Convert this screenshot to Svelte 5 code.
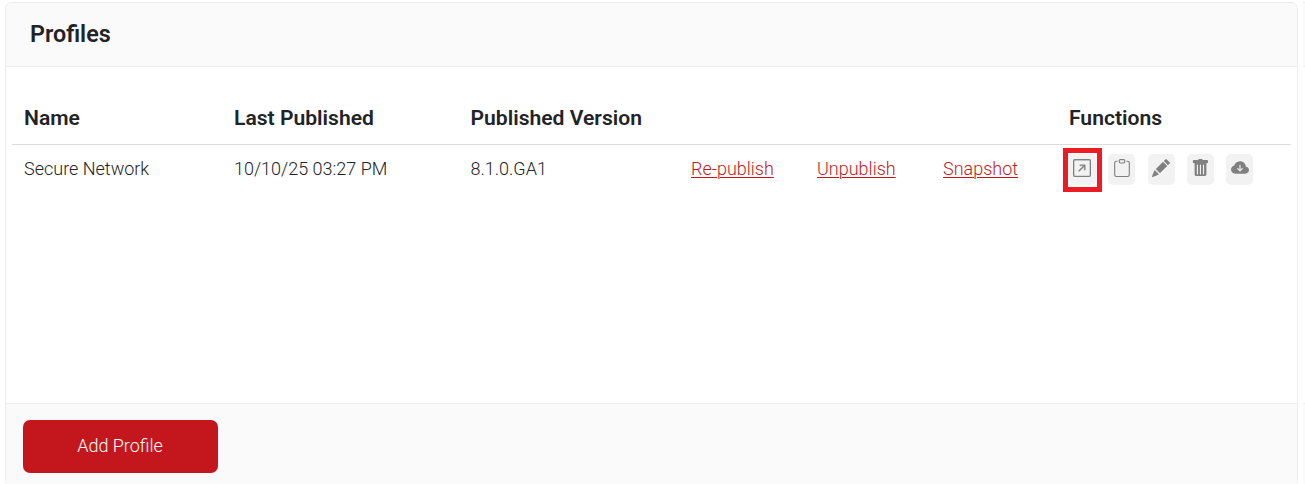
<script lang="ts">
    const profiles = [
        {
            name: "Secure Network",
            published: "10/10/25 03:27 PM",
            version: "8.1.0.GA1",
        },
    ];

    const actions = ["Re-publish", "Unpublish", "Snapshot"];

    const functions = [
        {
            name: "open",
            selected: true,
            path: "M15 2a1 1 0 0 0-1-1H2a1 1 0 0 0-1 1v12a1 1 0 0 0 1 1h12a1 1 0 0 0 1-1zM0 2a2 2 0 0 1 2-2h12a2 2 0 0 1 2 2v12a2 2 0 0 1-2 2H2a2 2 0 0 1-2-2zm5.854 8.803a.5.5 0 1 1-.708-.707L9.243 6H6.475a.5.5 0 1 1 0-1h3.975a.5.5 0 0 1 .5.5v3.975a.5.5 0 1 1-1 0V6.707z",
        },
        {
            name: "copy",
            path: "M4 1.5H3a2 2 0 0 0-2 2V14a2 2 0 0 0 2 2h10a2 2 0 0 0 2-2V3.5a2 2 0 0 0-2-2h-1v1h1a1 1 0 0 1 1 1V14a1 1 0 0 1-1 1H3a1 1 0 0 1-1-1V3.5a1 1 0 0 1 1-1h1zM9.5 1a.5.5 0 0 1 .5.5v1a.5.5 0 0 1-.5.5h-3a.5.5 0 0 1-.5-.5v-1a.5.5 0 0 1 .5-.5zm-3-1A1.5 1.5 0 0 0 5 1.5v1A1.5 1.5 0 0 0 6.5 4h3A1.5 1.5 0 0 0 11 2.5v-1A1.5 1.5 0 0 0 9.5 0z",
        },
        {
            name: "edit",
            path: "M12.854.146a.5.5 0 0 0-.707 0L10.5 1.793 14.207 5.5l1.647-1.646a.5.5 0 0 0 0-.708zm.646 6.061L9.793 2.5 3.293 9H3.5a.5.5 0 0 1 .5.5v.5h.5a.5.5 0 0 1 .5.5v.5h.5a.5.5 0 0 1 .5.5v.5h.5a.5.5 0 0 1 .5.5v.207zm-7.468 7.468A.5.5 0 0 1 6 13.5V13h-.5a.5.5 0 0 1-.5-.5V12h-.5a.5.5 0 0 1-.5-.5V11h-.5a.5.5 0 0 1-.5-.5V10h-.5a.5.5 0 0 1-.175-.032l-.179.178a.5.5 0 0 0-.11.168l-2 5a.5.5 0 0 0 .65.65l5-2a.5.5 0 0 0 .168-.11z",
        },
        {
            name: "delete",
            path: "M2.5.9a1 1 0 0 0-.9 1v.8a1 1 0 0 0 1 1h.6v10.1a1.3 1.3 0 0 0 1.3 1.3h7.9a1.3 1.3 0 0 0 1.3-1.3V3.7h.5a1 1 0 0 0 1-1v-.8a1 1 0 0 0-1-1H10.4A1 1 0 0 0 9.4.1H7.3a1 1 0 0 0-1 .8zM5.7 4.8a.5.5 0 0 1 .5.5v8a.5.5 0 0 1-1 0v-8a.5.5 0 0 1 .5-.5M8.4 4.8a.5.5 0 0 1 .5.5v8a.5.5 0 0 1-1 0v-8a.5.5 0 0 1 .5-.5M11.6 5.3v8a.5.5 0 0 1-1 0v-8a.5.5 0 0 1 1 0",
        },
        {
            name: "download",
            path: "M8 2a5.53 5.53 0 0 0-3.594 1.342c-.766.66-1.321 1.52-1.464 2.383C1.266 6.095 0 7.555 0 9.318 0 11.366 1.708 13 3.781 13h8.906C14.502 13 16 11.57 16 9.773c0-1.636-1.242-2.969-2.834-3.194C12.923 3.999 10.69 2 8 2m2.354 6.854-2 2a.5.5 0 0 1-.708 0l-2-2a.5.5 0 1 1 .708-.708L7.5 9.293V5.5a.5.5 0 0 1 1 0v3.793l1.146-1.147a.5.5 0 0 1 .708.708",
        },
    ];
</script>

<div class="page">
    <section class="card">
        <header>Profiles</header>
        <div class="body">
            <div class="row head">
                <span>Name</span>
                <span>Last Published</span>
                <span>Published Version</span>
                <span></span>
                <span></span>
                <span></span>
                <span>Functions</span>
            </div>
            {#each profiles as profile}
                <div class="row">
                    <span>{profile.name}</span>
                    <span>{profile.published}</span>
                    <span>{profile.version}</span>
                    {#each actions as action}
                        <a href="#{action}">{action}</a>
                    {/each}
                    <div class="functions">
                        {#each functions as fn}
                            <button
                                class="icon"
                                class:selected={fn.selected}
                                aria-label={fn.name}
                            >
                                <svg viewBox="0 0 16 16"><path d={fn.path} /></svg>
                            </button>
                        {/each}
                    </div>
                </div>
            {/each}
        </div>
        <footer><button class="add">Add Profile</button></footer>
    </section>
    <!-- Next card, mostly scrolled out on the right -->
    <section class="card next">
        <header></header>
        <div class="body"></div>
        <footer></footer>
    </section>
</div>

<style>
    :global(body) {
        background: #fff;
        overflow: hidden;
    }
    .page {
        display: flex;
        gap: 5px;
        height: 484px;
        padding: 2px 0 0 5px;
        box-sizing: border-box;
        overflow: hidden;
        font-family: Roboto, sans-serif;
        font-size: 18px;
        font-weight: 300;
        color: #222326;
    }
    .card {
        display: flex;
        flex-direction: column;
        flex: none;
        width: 1293px;
        height: 485px;
        box-sizing: border-box;
        border: 1px solid #ededed;
        border-radius: 7px;
        overflow: hidden;
    }
    .next {
        border-left: 0;
        border-radius: 0;
    }
    header {
        height: 63px;
        flex: none;
        padding-left: 24px;
        background: #fafafa;
        border-bottom: 1px solid #ededed;
        line-height: 63px;
        font-size: 23.3px;
        font-weight: 600;
    }
    .body {
        flex: none;
        height: 336px;
        box-sizing: border-box;
        padding: 25px 6px 0;
    }
    .row {
        display: grid;
        grid-template-columns: 210px 236.5px 220.5px 126px 126px 126px 1fr;
        align-items: center;
        height: 47px;
        padding-left: 12px;
    }
    .head {
        height: 50px;
        padding-bottom: 2px;
        border-bottom: 1px solid #dcdcdc;
        font-size: 21.1px;
        font-weight: 600;
    }
    a {
        color: #c4171d;
        text-underline-offset: 2px;
        text-decoration-thickness: 1px;
    }
    .functions {
        display: flex;
        gap: 12.25px;
        padding-top: 1px;
    }
    .icon {
        position: relative;
        display: flex;
        align-items: flex-start;
        width: 27px;
        height: 31px;
        padding: 5px 0 0 4.6px;
        border: 0;
        border-radius: 5px;
        background: #f2f2f2;
        color: #808080;
    }
    .icon.selected {
        padding-left: 4px;
    }
    .icon.selected path {
        stroke: currentColor;
        stroke-width: 0.3;
    }
    .icon.selected::after {
        content: "";
        position: absolute;
        inset: -6px -6px -7px;
        border: 5px solid #ed1c24;
    }
    svg {
        flex: none;
        width: 18px;
        height: 18px;
        fill: currentColor;
    }
    footer {
        flex: 1;
        padding: 16px 17px;
        background: #fafafa;
        border-top: 1px solid #ededed;
    }
    .add {
        display: block;
        width: 195px;
        height: 53px;
        padding: 0 1px 2px 0;
        border: 0;
        border-radius: 7px;
        background: #c4171d;
        color: #fff;
        font: inherit;
    }
</style>
